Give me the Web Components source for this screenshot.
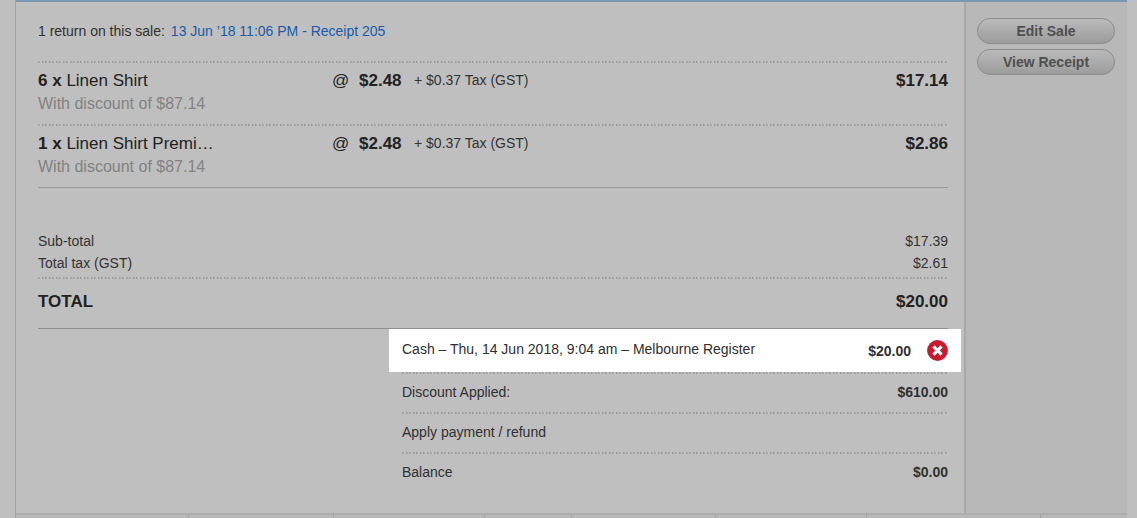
<!DOCTYPE html>
<html lang="en">
<head>
<meta charset="utf-8">
<title>Sale details</title>
<style>
  body { margin: 0; background: #bfbfbf; color: #303030; font: 14px/20px "Liberation Sans", Arial, sans-serif; overflow-x: hidden; }
</style>
</head>
<body>
<sale-panel>
  <returns-note>1 return on this sale: <a slot="link" href="#receipt-205">13 Jun ’18 11:06 PM - Receipt 205</a></returns-note>
  <line-item qty="6" price="$2.48" tax="+ $0.37 Tax (GST)" total="$17.14" note="With discount of $87.14">Linen Shirt</line-item>
  <line-item qty="1" price="$2.48" tax="+ $0.37 Tax (GST)" total="$2.86" note="With discount of $87.14">Linen Shirt Premi…</line-item>
  <sale-totals></sale-totals>
  <payment-list>
    <payment-row highlight amount="$20.00">Cash – Thu, 14 Jun 2018, 9:04 am – Melbourne Register</payment-row>
    <payment-row amount="$610.00">Discount Applied:</payment-row>
    <payment-row>Apply payment / refund</payment-row>
    <payment-row amount="$0.00">Balance</payment-row>
  </payment-list>
  <pill-button slot="actions">Edit Sale</pill-button>
  <pill-button slot="actions">View Receipt</pill-button>
</sale-panel>
<script>
const dots = `background-image: linear-gradient(90deg, #9c9c9c 0 1px, #acacac 1px 2px, transparent 2px 4px, #9c9c9c 4px 5px, #acacac 5px 6px, transparent 6px 7px); background-size: 7px 2px; background-repeat: repeat-x;`;

class Base extends HTMLElement {
  constructor() {
    super();
    const t = document.createElement('template');
    t.innerHTML = this.markup();
    this.attachShadow({ mode: 'open' }).append(t.content.cloneNode(true));
  }
}

customElements.define('sale-panel', class extends Base {
  markup() { return `<style>
    :host { display: block; margin: 0 9px 0 15px; border-left: 1px solid #a3a3a3; }
    .body { display: grid; grid-template-columns: 1fr 163px; border-top: 2px solid #7898b4; border-bottom: 2px solid #adadad; margin-right: 1px; }
    main { padding: 19px 16px 21px 22px; min-width: 0; }
    aside { border-left: 2px solid #a9a9a9; background: #b8b8b8; padding: 16px 12px 16px 11px; display: flex; flex-direction: column; gap: 5px; }
    .next { display: grid; grid-template-columns: 172fr 145fr 151fr 87fr 144fr 151fr 174fr 87fr; height: 3px; margin-right: 1px; background: #b8b8b8; }
    .next i { border-left: 1px solid #a3a3a3; }
    .next i:first-child { border-left: 0; }
  </style>
  <div class="body"><main><slot></slot></main><aside><slot name="actions"></slot></aside></div>
  <div class="next"><i></i><i></i><i></i><i></i><i></i><i></i><i></i><i></i></div>`; }
});

customElements.define('returns-note', class extends Base {
  markup() { return `<style>
    :host { display: flex; gap: 6px; padding-bottom: 20px; }
    ::slotted(a) { color: #185ba8; text-decoration: none; }
  </style><span><slot></slot></span><slot name="link"></slot>`; }
});

customElements.define('line-item', class extends Base {
  markup() {
    const a = n => this.getAttribute(n) || '';
    return `<style>
    :host { display: grid; grid-template-columns: 294px 27px 55px 1fr auto; padding: 8px 0 9px; font-size: 17px; line-height: 23px; ${dots} color: #222; }
    .tax { font-size: 14px; color: #333; }
    .note { grid-column: 1 / -1; font-size: 16px; color: #828282; }
  </style>
  <span><b>${a('qty')} x</b> <slot></slot></span><span>@</span><b>${a('price')}</b><span class="tax">${a('tax')}</span><b>${a('total')}</b>
  <span class="note">${a('note')}</span>`; }
});

customElements.define('sale-totals', class extends Base {
  markup() { return `<style>
    :host { display: block; border-top: 1px solid #999; border-bottom: 1px solid #8f8f8f; padding-top: 42px; }
    div { display: flex; justify-content: space-between; line-height: 22px; color: #333; }
    .total { margin-top: 3px; padding: 14px 0 15px; font-size: 17px; font-weight: bold; ${dots} color: #222; }
  </style>
  <div><span>Sub-total</span><span>$17.39</span></div>
  <div><span>Total tax (GST)</span><span>$2.61</span></div>
  <div class="total"><span>TOTAL</span><span>$20.00</span></div>`; }
});

customElements.define('payment-list', class extends Base {
  markup() { return `<style>:host { display: block; margin-left: 40%; }</style><slot></slot>`; }
});

customElements.define('payment-row', class extends Base {
  markup() {
    const hi = this.hasAttribute('highlight');
    return `<style>
    :host { display: flex; justify-content: space-between; padding: 10px 0; ${dots} }
    :host([highlight]) { background: #fff; margin: 0 -13px; padding: 11px 13px; line-height: 18px; }
    .amount { display: flex; align-items: center; gap: 16px; }
    button { display: block; width: 21px; height: 21px; padding: 0; border: 0; background: none; }
    svg { display: block; }
  </style>
  <span><slot></slot></span>
  <span class="amount"><b>${this.getAttribute('amount') || ''}</b>${hi ? `<button aria-label="Remove payment"><svg width="21" height="21" viewBox="0 0 21 21"><circle cx="10.5" cy="10.5" r="10.4" fill="#c8192e"/><path d="M7.6 7.6l5.8 5.8M13.4 7.6l-5.8 5.8" stroke="#fff" stroke-width="3.2" stroke-linecap="square"/></svg></button>` : ''}</span>`; }
});

customElements.define('pill-button', class extends Base {
  markup() { return `<style>
    :host { display: block; }
    button { display: block; box-sizing: border-box; width: 100%; height: 26px; padding: 0; border: 1px solid #8c8c8c; border-radius: 13px; background: linear-gradient(#bababa, #9c9c9c); color: #4f4f4f; font: bold 14px/22px "Liberation Sans", Arial, sans-serif; }
  </style><button><slot></slot></button>`; }
});
</script>
</body>
</html>
